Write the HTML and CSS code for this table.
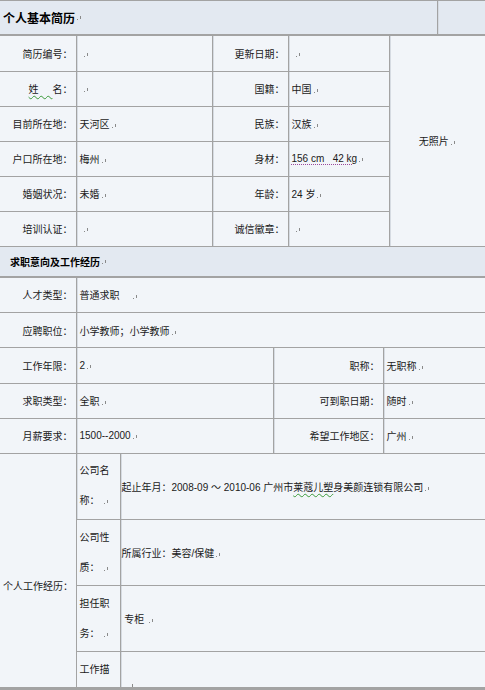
FILE: index.html
```html
<!DOCTYPE html>
<html lang="zh-CN">
<head>
<meta charset="utf-8">
<title>个人基本简历</title>
<link rel="stylesheet" href="styles.css">
</head>
<body>
<div class="doc">
  <div class="band title-band">
    <div class="band-main"><span class="title">个人基本简历</span><span class="pm"></span></div>
    <div class="band-side"></div>
  </div>

  <table class="grid t1">
    <colgroup><col class="w76"><col class="w136"><col class="w76"><col class="w101"><col></colgroup>
    <tr>
      <td class="lab">简历编号：</td><td class="val"> <span class="pm ind"></span></td>
      <td class="lab">更新日期：</td><td class="val"><span class="pm ind"></span></td>
      <td class="photo" rowspan="6">无照片<span class="pm"></span></td>
    </tr>
    <tr>
      <td class="lab"><span class="wavy-g">姓&nbsp;&nbsp;&nbsp;&nbsp;&nbsp;</span>名：</td><td class="val"><span class="pm ind"></span></td>
      <td class="lab">国籍：</td><td class="val">中国<span class="pm"></span></td>
    </tr>
    <tr>
      <td class="lab">目前所在地：</td><td class="val">天河区<span class="pm"></span></td>
      <td class="lab">民族：</td><td class="val">汉族<span class="pm"></span></td>
    </tr>
    <tr>
      <td class="lab">户口所在地：</td><td class="val">梅州<span class="pm"></span></td>
      <td class="lab">身材：</td><td class="val"><span class="wavy-p">156 cm&nbsp;&nbsp; 42 kg</span><span class="pm"></span></td>
    </tr>
    <tr>
      <td class="lab">婚姻状况：</td><td class="val">未婚<span class="pm"></span></td>
      <td class="lab">年龄：</td><td class="val">24 岁<span class="pm"></span></td>
    </tr>
    <tr>
      <td class="lab">培训认证：</td><td class="val"><span class="pm ind"></span></td>
      <td class="lab">诚信徽章：</td><td class="val"><span class="pm ind"></span></td>
    </tr>
  </table>

  <div class="band sec-band">
    <div class="band-main"><span class="sec">求职意向及工作经历</span><span class="pm"></span></div>
  </div>

  <table class="grid t2">
    <colgroup><col class="w76"><col></colgroup>
    <tr><td class="lab">人才类型：</td><td class="val">普通求职&nbsp;&nbsp;&nbsp;&nbsp;<span class="pm"></span></td></tr>
    <tr><td class="lab">应聘职位：</td><td class="val">小学教师；小学教师<span class="pm"></span></td></tr>
  </table>

  <table class="grid t3">
    <colgroup><col class="w76"><col class="w197"><col class="w110"><col></colgroup>
    <tr>
      <td class="lab">工作年限：</td><td class="val">2<span class="pm"></span></td>
      <td class="lab">职称：</td><td class="val">无职称<span class="pm"></span></td>
    </tr>
    <tr>
      <td class="lab">求职类型：</td><td class="val">全职<span class="pm"></span></td>
      <td class="lab">可到职日期：</td><td class="val">随时<span class="pm"></span></td>
    </tr>
    <tr>
      <td class="lab">月薪要求：</td><td class="val">1500--2000<span class="pm"></span></td>
      <td class="lab">希望工作地区：</td><td class="val">广州<span class="pm"></span></td>
    </tr>
  </table>

  <table class="grid t4">
    <colgroup><col class="w76"><col class="w44"><col></colgroup>
    <tr class="r1">
      <td class="lab outer" rowspan="4">个人工作经历：</td>
      <td class="sub">公司名称：<span class="pm ind"></span></td>
      <td class="desc">起止年月：2008-09 ～ 2010-06 广州市<span class="wavy-g">莱蔻儿塑</span>身美颜连锁有限公司<span class="pm"></span></td>
    </tr>
    <tr class="r2">
      <td class="sub">公司性质：<span class="pm ind"></span></td>
      <td class="desc">所属行业：美容/保健<span class="pm"></span></td>
    </tr>
    <tr class="r3">
      <td class="sub">担任职务：<span class="pm ind"></span></td>
      <td class="desc">&nbsp;专柜 <span class="pm"></span></td>
    </tr>
    <tr class="r4">
      <td class="sub">工作描述：<span class="pm ind"></span></td>
      <td class="desc">&nbsp;&nbsp;<span class="pm"></span></td>
    </tr>
  </table>
</div>
<div class="edge"></div>
</body>
</html>
```

FILE: styles.css
```css
* { box-sizing: border-box; }

html, body {
  margin: 0;
  padding: 0;
  background: #f2f5f9;
}

body {
  font-family: "Liberation Sans", "Noto Sans CJK SC", sans-serif;
  font-size: 10px;
  color: #1a1a1a;
  width: 485px;
  height: 690px;
  overflow: hidden;
}

.doc {
  width: 485px;
  height: 687px;
  overflow: hidden;
}

.edge {
  width: 485px;
  height: 3px;
  background: #a3a3a3;
}

.band {
  display: flex;
  background: #e3e9f1;
  border-top: 1px solid #a3a3a3;
  border-bottom: 2px solid #a3a3a3;
}

.title-band {
  height: 36px;
}

.sec-band {
  height: 31px;
  border-top: none;
}

.band-main {
  flex: 1;
  display: flex;
  align-items: center;
  padding-left: 3px;
}

.sec-band .band-main {
  padding-left: 10px;
}

.band-side {
  width: 48px;
  border-left: 1px solid #a3a3a3;
  box-shadow: inset 1px 0 0 #d6dbe2;
}

.title {
  font-size: 12px;
  font-weight: bold;
  color: #000;
}

.sec {
  font-size: 10px;
  font-weight: bold;
  color: #000;
}

.grid {
  width: 485px;
  border-collapse: collapse;
  table-layout: fixed;
}

.grid td {
  border: 1px solid #a3a3a3;
  height: 35px;
  padding: 0 3px;
  vertical-align: middle;
  white-space: nowrap;
}

.grid tr:first-child td { border-top: none; }
.grid td:first-child { border-left: none; }
.grid td:last-child { border-right: none; }

.grid td + td {
  box-shadow: inset 1px 0 0 #d6dbe2;
}

.w76 { width: 76px; }
.w136 { width: 136px; }
.w101 { width: 101px; }
.w197 { width: 197px; }
.w110 { width: 110px; }
.w44 { width: 44px; }

.lab {
  text-align: right;
}

.val {
  text-align: left;
}

.photo {
  text-align: center;
}

.t4 .outer {
  border-left: 1px solid #a3a3a3;
  padding-right: 3px;
}

.t4 .sub {
  white-space: normal;
  line-height: 30px;
  text-align: left;
}

.t4 .desc {
  padding-left: 1px;
}

.t4 .r1 td, .t4 .r2 td, .t4 .r3 td { height: 66px; }
.t4 .r4 td { height: 66px; }

.pm {
  display: inline-block;
  position: relative;
  width: 5px;
  height: 5px;
  margin-left: 2px;
  vertical-align: baseline;
}

.pm::before {
  content: "";
  position: absolute;
  left: 0;
  bottom: 0;
  width: 1px;
  height: 1px;
  background: #8a8a8a;
}

.pm::after {
  content: "";
  position: absolute;
  left: 3px;
  bottom: 1px;
  width: 1px;
  height: 3px;
  background: #8a8a8a;
}

.pm.ind {
  margin-left: 4px;
}

.wavy-g {
  text-decoration: underline wavy #3a9a3a;
  text-underline-offset: 2px;
  text-decoration-thickness: 1px;
}

.wavy-p {
  text-decoration: underline dotted #9a4a9a;
  text-underline-offset: 2px;
}
```
